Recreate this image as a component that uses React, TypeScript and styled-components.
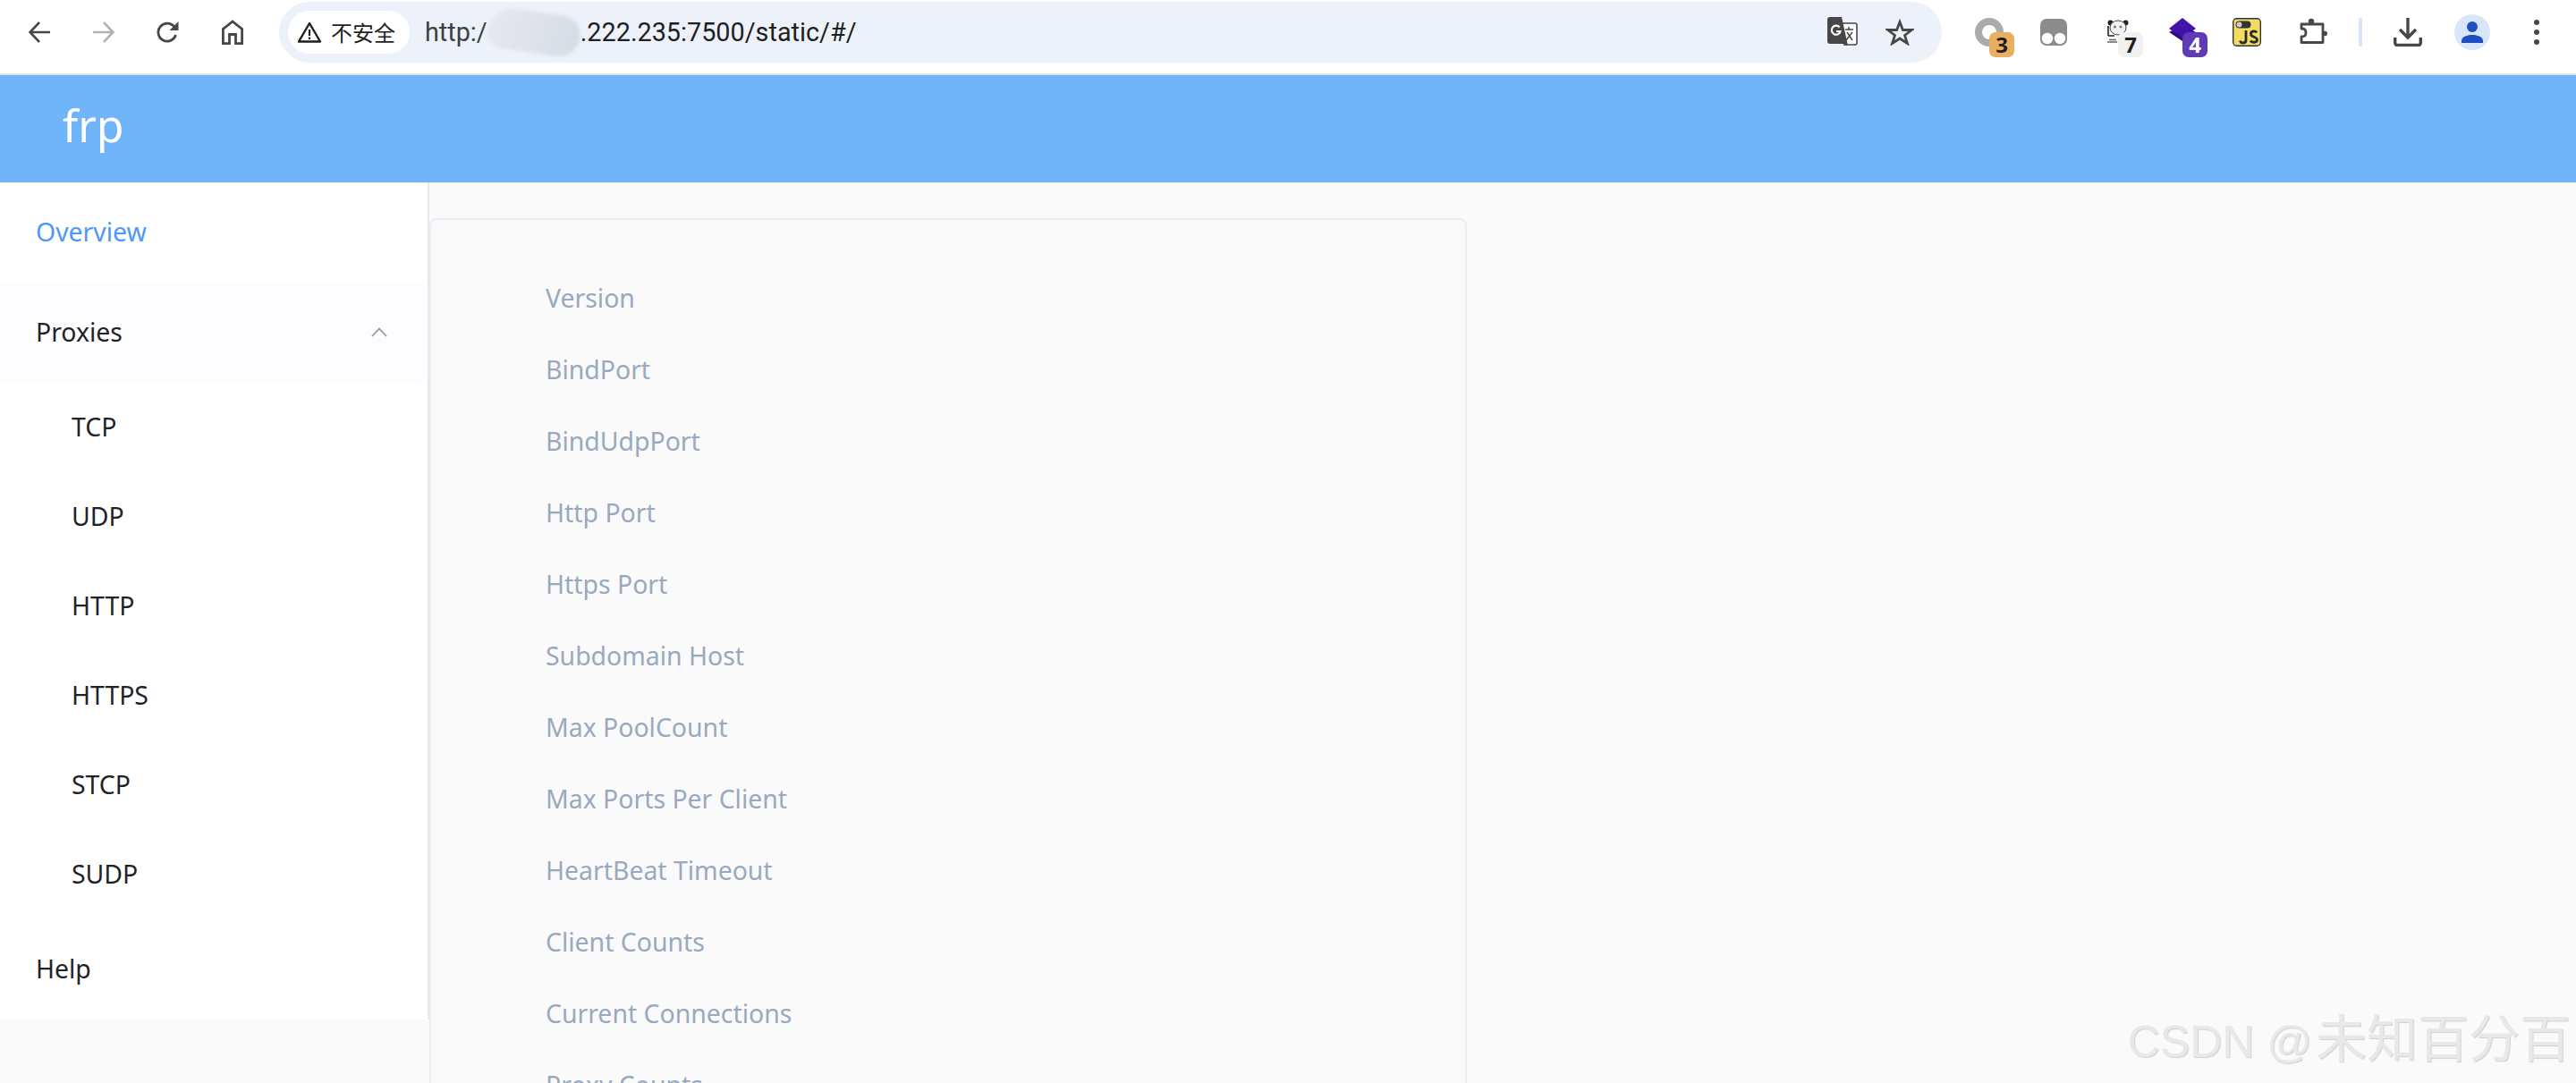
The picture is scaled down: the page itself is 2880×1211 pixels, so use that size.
import React from 'react';
import styled, { createGlobalStyle } from 'styled-components';

const Global = createGlobalStyle`
  html, body { margin: 0; padding: 0; height: 100%; overflow: hidden; background: #fafafa; }
  #root { height: 100%; }
  * { box-sizing: border-box; }
`;

const SANS = `"Noto Sans", "Noto Sans CJK SC", "Open Sans", sans-serif`;

const Page = styled.div`
  position: relative;
  height: 1211px;
  overflow: hidden;
  display: flex;
  flex-direction: column;
  font-family: ${SANS};
`;

const Toolbar = styled.div`
  flex: none;
  height: 84px;
  display: flex;
  align-items: flex-start;
  padding: 0 8px;
  background: #fff;
  border-bottom: 2px solid #e1e3e6;
`;

const Slot = styled.div<{ $w?: number }>`
  position: relative;
  flex: none;
  width: ${p => p.$w ?? 72}px;
  height: 72px;
  display: flex;
  align-items: center;
  justify-content: center;
`;

const PuzzleSlot = styled(Slot)`
  margin-left: 2px;
`;

const Omnibox = styled.div`
  flex: 1;
  height: 68px;
  margin: 2px 17px 0 16px;
  padding: 0 15px 0 10px;
  border-radius: 34px;
  background: #edf2fa;
  display: flex;
  align-items: center;
`;

const SecurityChip = styled.div`
  flex: none;
  height: 48px;
  padding: 0 16px 0 10px;
  border-radius: 24px;
  background: #fff;
  display: flex;
  align-items: center;
  gap: 10px;
  font: 400 24px/1 "Noto Sans CJK SC", sans-serif;
  color: #1f1f1f;
`;

const Url = styled.div`
  flex: 1;
  margin-left: 17px;
  display: flex;
  align-items: center;
  font: 400 28.8px/1 Roboto, "Noto Sans", sans-serif;
  color: #3c4043;
`;

const UrlHost = styled.span`
  color: #1f1f1f;
`;

const Smudge = styled.span`
  flex: none;
  width: 104px;
  height: 46px;
  border-radius: 30px 24px 26px 20px;
  background: linear-gradient(100deg, #e6e9ef, #d6dbe4);
  filter: blur(2px);
  transform: rotate(8deg);
`;

const Badge = styled.div<{ $bg: string; $fg: string }>`
  position: absolute;
  top: 36px;
  right: 8px;
  width: 28px;
  height: 28px;
  border-radius: 7px;
  background: ${p => p.$bg};
  color: ${p => p.$fg};
  display: flex;
  align-items: center;
  justify-content: center;
  font: 700 24px/1 "Open Sans", sans-serif;
`;

const Divider = styled.div`
  width: 4px;
  height: 32px;
  border-radius: 2px;
  background: #d8e3fb;
`;

const AppHeader = styled.header`
  flex: none;
  height: 120px;
  background: #70b4f9;
  display: flex;
  align-items: center;
  padding: 0 0 9px 70px;
  color: #fff;
  font: 400 50px/1 ${SANS};
`;

const Body = styled.div`
  flex: 1;
  min-height: 0;
  display: flex;
  align-items: flex-start;
`;

const Sidebar = styled.nav`
  flex: none;
  width: 480px;
  height: 936px;
  background: #fff;
  border-right: 2px solid #e6e8f0;
`;

const MenuItem = styled.div<{ $active?: boolean; $open?: boolean }>`
  height: 112px;
  display: flex;
  align-items: center;
  justify-content: space-between;
  padding: 0 45px 2px 40px;
  font-size: 28.4px;
  color: ${p => (p.$active ? '#4f97fb' : '#1f2329')};
  background: ${p => (p.$open ? '#fdfdff' : 'transparent')};
`;

const SubItem = styled.div`
  height: 100px;
  display: flex;
  align-items: center;
  padding: 0 0 2px 80px;
  font-size: 28.4px;
  color: #1f2329;
`;

const Content = styled.main`
  flex: 1;
  min-width: 0;
  height: 100%;
  overflow: hidden;
`;

const Card = styled.section`
  width: 1160px;
  height: 1200px;
  margin-top: 40px;
  padding: 48px 0 0 128px;
  border: 2px solid #ebeef8;
  border-radius: 8px;
  background: #fafafa;
`;

const Row = styled.div`
  height: 80px;
  display: flex;
  align-items: center;
  padding-bottom: 2px;
  font-size: 28.4px;
  color: #99a9bf;
`;

const Watermark = styled.div`
  position: absolute;
  right: 6px;
  bottom: 20px;
  display: flex;
  align-items: baseline;
  font: 400 57px/1 "Liberation Sans", "Noto Sans CJK SC", sans-serif;
  color: #e8e8e8;
  text-shadow: 1px 1px 1px #d0d0d0;
  white-space: nowrap;
`;

const WatermarkLatin = styled.span`
  font-size: 50px;
  margin-right: 4px;
`;

const Back = () => (
  <svg width="24" height="24" viewBox="0 0 24 24" fill="none" stroke="#474747" strokeWidth="2.6">
    <path d="M24 12H2M12 1 1.500 12 12 23" />
  </svg>
);
const Forward = () => (
  <svg width="24" height="24" viewBox="0 0 24 24" fill="none" stroke="#b2b2b2" strokeWidth="2.6">
    <path d="M0 12h22M12 1l10.500 11L12 23" />
  </svg>
);
const Reload = () => (
  <svg width="26" height="26" viewBox="0 0 26 26" fill="none">
    <path d="M21.500 16a10 10 0 1 1-1.200-8.400" stroke="#474747" strokeWidth="2.800" />
    <path d="M24.500 1v10h-10z" fill="#474747" />
  </svg>
);
const Home = () => (
  <svg width="24" height="28" viewBox="0 0 24 28" fill="none" stroke="#474747" strokeWidth="2.800">
    <path d="M1.400 26.600V10.500L12 2l10.600 8.500V26.600H15.500V16.500H8.500V26.600Z" />
  </svg>
);
const Warning = () => (
  <svg width="28" height="24" viewBox="0 0 28 24" fill="none">
    <path d="M14 2 26 22.500H2Z" stroke="#1f1f1f" strokeWidth="2.400" strokeLinejoin="round" />
    <path d="M14 9v7M14 17.500v2.500" stroke="#1f1f1f" strokeWidth="2.200" />
  </svg>
);
const Translate = () => (
  <svg width="34" height="34" viewBox="0 0 34 34">
    <path d="M14 7h17a2 2 0 0 1 2 2v20a2 2 0 0 1-2 2H18" fill="#fff" stroke="#474747" strokeWidth="1.600" />
    <path d="M3 0h13l7 32-6-2H3a3 3 0 0 1-3-3V3a3 3 0 0 1 3-3z" fill="#474747" />
    <path d="M13.600 11.500a5 5 0 1 0 1 4.500H10" fill="none" stroke="#fff" strokeWidth="2.200" />
    <path d="M20 14h9M24 11v3M21 26l7-9M22 17l6 9" fill="none" stroke="#474747" strokeWidth="1.500" />
  </svg>
);
const Star = () => (
  <svg width="32" height="30" viewBox="0 0 32 30" fill="none">
    <path d="M16 3.500 19.400 12.500 29.500 12.500 21.500 18.500 24.400 27.500 16 22 7.600 27.500 10.500 18.500 2.500 12.500 12.600 12.500Z" stroke="#474747" strokeWidth="2.800" strokeLinejoin="miter" />
  </svg>
);
const Ring = () => (
  <svg width="32" height="32" viewBox="0 0 32 32" fill="none">
    <circle cx="16" cy="16" r="12" stroke="#ababab" strokeWidth="8" />
  </svg>
);
const Tampermonkey = () => (
  <svg width="30" height="30" viewBox="0 0 30 30">
    <rect width="30" height="30" rx="7" fill="#8c8c8c" />
    <circle cx="8" cy="22" r="6.200" fill="#fff" />
    <circle cx="22" cy="22" r="6.200" fill="#fff" />
  </svg>
);
const Panda = () => (
  <svg width="24" height="28" viewBox="0 0 24 28">
    <circle cx="3.500" cy="3.500" r="3" fill="#222" />
    <circle cx="20.500" cy="3.500" r="3" fill="#222" />
    <ellipse cx="12" cy="9" rx="9" ry="8" fill="#f1f1f1" stroke="#444" strokeWidth="1" />
    <circle cx="8.500" cy="8" r="1.500" fill="#777" />
    <circle cx="15" cy="8" r="1.500" fill="#777" />
    <path d="M1 7v11M1 18h7" stroke="#222" strokeWidth="1.600" fill="none" />
    <path d="M0 25h11M2 22.500h8" stroke="#666" strokeWidth="1.400" />
  </svg>
);
const Stack = () => (
  <svg width="32" height="32" viewBox="0 0 32 32">
    <path d="M1 16 16 26 31 16 16 8Z" fill="#2c1080" />
    <path d="M1 12 16 0 31 12 16 22Z" fill="#4312a8" />
  </svg>
);
const JsToggle = () => (
  <svg width="32" height="32" viewBox="0 0 32 32">
    <rect x=".7" y=".7" width="30.600" height="30.600" rx="4" fill="#f2dc63" stroke="#333" strokeWidth="1.400" />
    <rect x="3.500" y="3.500" width="17" height="8" rx="4" fill="#333" />
    <circle cx="7.500" cy="7.500" r="3" fill="#ccc" />
    <path d="M15 14v10.500a3.300 3.300 0 0 1-6.500 1M27 16.500c-1-2-6.500-2.500-6.500 1.500 0 4 7 2.500 7 6.500 0 3.500-6 3.500-7.500 1" fill="none" stroke="#2b2b2b" strokeWidth="2.800" />
  </svg>
);
const Puzzle = () => (
  <svg width="32" height="32" viewBox="0 0 32 32" fill="none">
    <path d="M3 7h24v20.500H3V21c3.500 0 5-1 5-4.500S6.500 12 3 12Z" stroke="#474747" strokeWidth="2.800" strokeLinejoin="round" />
    <circle cx="14" cy="4" r="3.200" fill="#474747" />
    <circle cx="29.300" cy="17.500" r="2.700" fill="#474747" />
  </svg>
);
const Download = () => (
  <svg width="32" height="32" viewBox="0 0 32 32" fill="none" stroke="#474747" strokeWidth="3.400">
    <path d="M16 0v21M7 13l9 9 9-9" />
    <path d="M1.700 22v6a2.500 2.500 0 0 0 2.500 2.500h23.600a2.500 2.500 0 0 0 2.500-2.500v-6" />
  </svg>
);
const Avatar = () => (
  <svg width="40" height="40" viewBox="0 0 40 40">
    <circle cx="20" cy="20" r="20" fill="#d9e5fb" />
    <circle cx="20" cy="14" r="6" fill="#1f4fc0" />
    <path d="M8 32v-2c0-5 6-7 12-7s12 2 12 7v2z" fill="#1f4fc0" />
  </svg>
);
const Kebab = () => (
  <svg width="6" height="28" viewBox="0 0 6 28" fill="#474747">
    <circle cx="3" cy="3" r="3" />
    <circle cx="3" cy="14" r="3" />
    <circle cx="3" cy="25" r="3" />
  </svg>
);
const Chevron = () => (
  <svg width="18" height="11" viewBox="0 0 18 11" fill="none" stroke="#909399" strokeWidth="1.600">
    <path d="M1 10 9 1.500 17 10" />
  </svg>
);

const menuTop = ['TCP', 'UDP', 'HTTP', 'HTTPS', 'STCP', 'SUDP'];
const rows = [
  'Version',
  'BindPort',
  'BindUdpPort',
  'Http Port',
  'Https Port',
  'Subdomain Host',
  'Max PoolCount',
  'Max Ports Per Client',
  'HeartBeat Timeout',
  'Client Counts',
  'Current Connections',
  'Proxy Counts',
];

export default function App() {
  return (
    <Page>
      <Global />
      <Toolbar>
        <Slot><Back /></Slot>
        <Slot><Forward /></Slot>
        <Slot><Reload /></Slot>
        <Slot><Home /></Slot>
        <Omnibox>
          <SecurityChip>
            <Warning />
            不安全
          </SecurityChip>
          <Url>
            http:/
            <Smudge />
            <UrlHost>.222.235:7500/static/#/</UrlHost>
          </Url>
          <Slot $w={64}><Translate /></Slot>
          <Slot $w={64}><Star /></Slot>
        </Omnibox>
        <Slot>
          <Ring />
          <Badge $bg="#e8b05e" $fg="#1f1f1f">3</Badge>
        </Slot>
        <Slot><Tampermonkey /></Slot>
        <Slot>
          <Panda />
          <Badge $bg="#f1f1f1" $fg="#1f1f1f">7</Badge>
        </Slot>
        <Slot>
          <Stack />
          <Badge $bg="#5f3ab5" $fg="#fff">4</Badge>
        </Slot>
        <Slot><JsToggle /></Slot>
        <PuzzleSlot><Puzzle /></PuzzleSlot>
        <Slot $w={34}><Divider /></Slot>
        <Slot><Download /></Slot>
        <Slot><Avatar /></Slot>
        <Slot><Kebab /></Slot>
      </Toolbar>
      <AppHeader>frp</AppHeader>
      <Body>
        <Sidebar>
          <MenuItem $active>Overview</MenuItem>
          <MenuItem $open>
            Proxies
            <Chevron />
          </MenuItem>
          {menuTop.map(m => (
            <SubItem key={m}>{m}</SubItem>
          ))}
          <MenuItem>Help</MenuItem>
        </Sidebar>
        <Content>
          <Card>
            {rows.map(r => (
              <Row key={r}>{r}</Row>
            ))}
          </Card>
        </Content>
      </Body>
      <Watermark>
        <WatermarkLatin>CSDN @</WatermarkLatin>
        未知百分百
      </Watermark>
    </Page>
  );
}
